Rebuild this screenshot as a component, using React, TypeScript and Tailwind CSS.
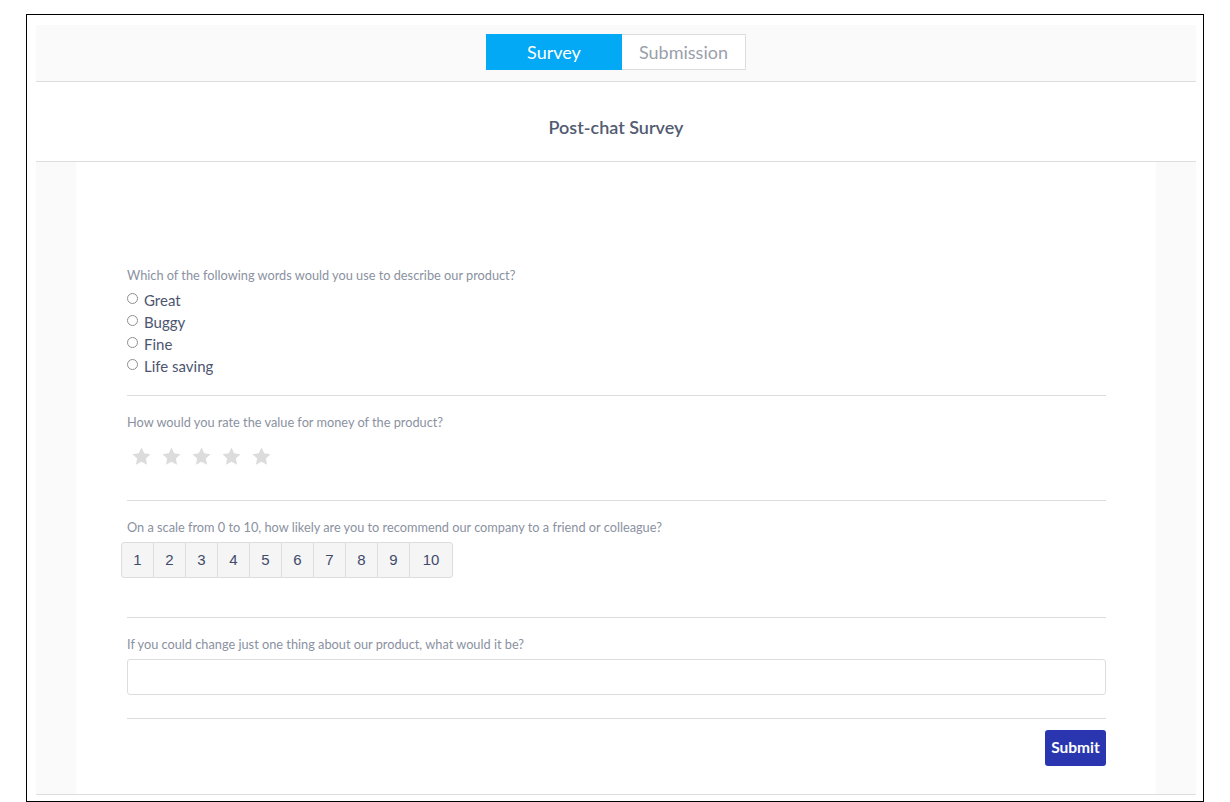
const font = { fontFamily: '"Lato", "Open Sans", sans-serif' }

function Star() {
  return (
    <svg viewBox="0 0 24 24" className="h-[21px] w-[21px]" fill="#dcdcdc">
      <path d="M12 1.8l3.1 6.6 7.2.9-5.3 5 1.4 7.1L12 17.9l-6.4 3.5 1.4-7.1-5.3-5 7.2-.9z" />
    </svg>
  )
}

function Label({ children }: { children: React.ReactNode }) {
  return <p className="text-[12.75px] leading-[18px] text-[#8a91a1]">{children}</p>
}

export default function App() {
  const options = ['Great', 'Buggy', 'Fine', 'Life saving']
  const nums = [1, 2, 3, 4, 5, 6, 7, 8, 9, 10]
  return (
    <div className="min-h-[802px] bg-white pl-[26px] pt-[14px]" style={font}>
      <div className="flex h-[788px] w-[1178px] flex-col border border-black pb-[6px] pl-[9px] pr-[7px] pt-[10px]">
        <div className="flex h-[57px] justify-center border-b border-[#dddddd] bg-[#fafafa] pt-[9px]">
          <div className="flex h-[36px]">
            <div className="flex w-[136px] items-center justify-center bg-[#03a9f4] text-[18px] text-white">Survey</div>
            <div className="flex w-[124px] items-center justify-center border border-l-0 border-[#dddddd] bg-white text-[18px] text-[#9a9fab]">
              Submission
            </div>
          </div>
        </div>
        <div className="flex h-[80px] items-center justify-center border-b border-[#dddddd] bg-white pt-[12px]">
          <h1 className="text-[18px] font-semibold text-[#525b72]">Post-chat Survey</h1>
        </div>
        <div className="flex flex-1 border-b border-[#dddddd] bg-[#fafafa] px-[40px]">
          <div className="flex-1 bg-white pl-[51px] pr-[50px] pt-[104px]">
            <Label>Which of the following words would you use to describe our product?</Label>
            <div className="mt-[5px] flex flex-col">
              {options.map((o) => (
                <label key={o} className="flex h-[22px] items-center gap-[6px] text-[15px] text-[#4d5570]">
                  <span className="mb-[4px] h-[11px] w-[11px] rounded-full border border-[#8f8f8f] bg-white" />
                  {o}
                </label>
              ))}
            </div>
            <div className="mt-[18px] border-t border-[#dddddd]" />
            <div className="mt-[17px]">
              <Label>How would you rate the value for money of the product?</Label>
            </div>
            <div className="mt-[15px] flex h-[20px] items-center gap-[9px] pl-[4px]">
              {[0, 1, 2, 3, 4].map((i) => (
                <Star key={i} />
              ))}
            </div>
            <div className="mt-[34px] border-t border-[#dddddd]" />
            <div className="mt-[17px]">
              <Label>On a scale from 0 to 10, how likely are you to recommend our company to a friend or colleague?</Label>
            </div>
            <div className="ml-[-6px] mt-[6px] flex h-[36px] w-fit rounded-[3px] border border-[#dddddd] bg-[#f5f5f5]">
              {nums.map((n) => (
                <div
                  key={n}
                  className={`flex items-center justify-center border-[#dddddd] text-[15px] text-[#3f4b6b] ${n === 10 ? 'w-[42px]' : 'w-[32px] border-r'}`}
                  style={{ fontFamily: '"Liberation Sans", Arial, sans-serif' }}
                >
                  {n}
                </div>
              ))}
            </div>
            <div className="mt-[39px] border-t border-[#dddddd]" />
            <div className="mt-[17px]">
              <Label>If you could change just one thing about our product, what would it be?</Label>
            </div>
            <input className="mt-[6px] h-[36px] w-full rounded-[3px] border border-[#dddddd] bg-white outline-none" />
            <div className="mt-[23px] border-t border-[#dddddd]" />
            <div className="mt-[11px] flex justify-end">
              <button className="h-[36px] w-[61px] rounded-[3px] bg-[#2a36af] text-[15.5px] font-bold text-white">Submit</button>
            </div>
          </div>
        </div>
      </div>
    </div>
  )
}
